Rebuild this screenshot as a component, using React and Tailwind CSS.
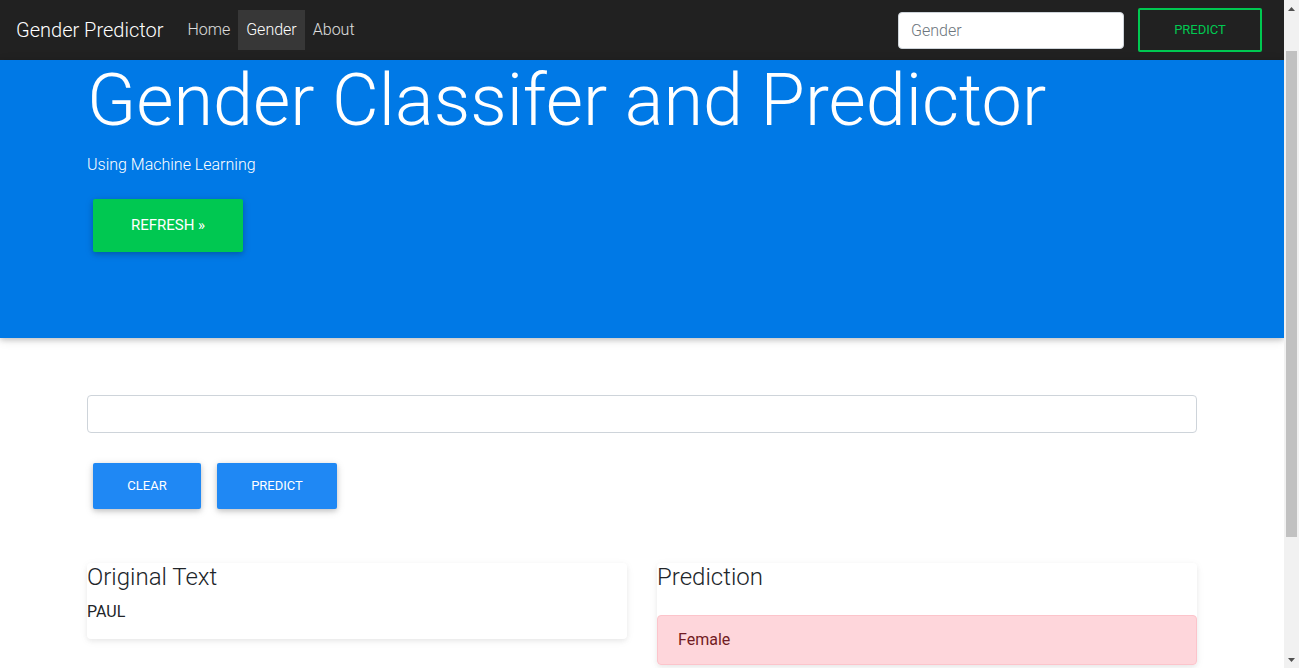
export default function App() {
  return (
    <div className="flex h-[668px] overflow-hidden bg-white font-['Roboto',sans-serif] font-light text-[#212529]">
      <div className="w-[1284px] shrink-0">
        <nav className="flex h-[60px] items-center bg-[#212121] pl-4 pr-[22px]">
          <span className="mr-4 text-[20px] font-light leading-[30px] text-white">Gender Predictor</span>
          <div className="flex items-center">
            <span className="px-2 text-[16px] leading-[40px] text-white/85">Home</span>
            <span className="bg-white/10 px-2 text-[16px] leading-[40px] text-white">Gender</span>
            <span className="px-2 text-[16px] leading-[40px] text-white/85">About</span>
          </div>
          <div className="ml-auto flex items-center">
            <input
              placeholder="Gender"
              className="mr-2 h-[37px] w-[226px] rounded-[4px] border border-[#ced4da] bg-white px-3 text-[16px] font-light text-[#495057] placeholder:text-[#6c757d] outline-none"
            />
            <button className="ml-[6px] h-[44px] w-[124px] rounded-[2px] border-2 border-[#00c851] text-[13px] font-normal uppercase text-[#00c851]">
              Predict
            </button>
          </div>
        </nav>

        <header className="h-[278px] bg-[#0079e6] shadow-[0_2px_5px_0_rgba(0,0,0,0.16),0_2px_10px_0_rgba(0,0,0,0.12)]">
          <div className="mx-auto w-[1110px] pt-[5px]">
            <h1 className="text-[72px] font-light leading-none text-white">Gender Classifer and Predictor</h1>
            <p className="mt-[16px] text-[16px] font-light leading-6 text-white">Using Machine Learning</p>
            <button className="ml-[6px] mt-[22px] h-[53px] w-[150px] rounded-[2px] bg-[#00c851] text-[15px] font-normal uppercase text-white shadow-[0_2px_5px_0_rgba(0,0,0,0.16),0_2px_10px_0_rgba(0,0,0,0.12)]">
              Refresh »
            </button>
          </div>
        </header>

        <main className="mx-auto w-[1110px] pt-[57px]">
          <input className="block h-[38px] w-full rounded-[4px] border border-[#ced4da] bg-white px-3 text-[16px] outline-none" />
          <div className="mt-[30px] flex gap-4 pl-[6px]">
            <button className="h-[46px] w-[108px] rounded-[2px] bg-[#1f88f4] text-[13px] font-normal uppercase text-white shadow-[0_2px_5px_0_rgba(0,0,0,0.16),0_2px_10px_0_rgba(0,0,0,0.12)]">
              Clear
            </button>
            <button className="h-[46px] w-[120px] rounded-[2px] bg-[#1f88f4] text-[13px] font-normal uppercase text-white shadow-[0_2px_5px_0_rgba(0,0,0,0.16),0_2px_10px_0_rgba(0,0,0,0.12)]">
              Predict
            </button>
          </div>

          <div className="mt-[54px] grid grid-cols-2 items-start gap-[30px]">
            <div className="rounded-[4px] bg-white shadow-[0_2px_5px_0_rgba(0,0,0,0.06),0_2px_10px_0_rgba(0,0,0,0.05)]">
              <h4 className="mb-2 text-[24px] font-light leading-[29px]">Original Text</h4>
              <p className="mb-[15px] text-[16px] font-normal leading-6">PAUL</p>
            </div>
            <div className="rounded-[4px] bg-white shadow-[0_2px_5px_0_rgba(0,0,0,0.06),0_2px_10px_0_rgba(0,0,0,0.05)]">
              <h4 className="text-[24px] font-light leading-[29px]">Prediction</h4>
              <div className="mt-[23px] rounded-[4px] border border-[#fcc4cb] bg-[#fed6db] px-5 py-3 text-[16px] font-normal leading-6 text-[#721c24]">
                Female
              </div>
            </div>
          </div>
        </main>
      </div>

      <div className="flex w-[15px] shrink-0 flex-col items-center bg-[#f1f1f1]">
        <div className="flex h-[17px] items-center justify-center">
          <svg width="7" height="4" viewBox="0 0 7 4"><path d="M3.5 0L7 4H0z" fill="#505050" /></svg>
        </div>
        <div className="mt-[34px] h-[486px] w-[11px] bg-[#c1c1c1]" />
        <div className="mt-auto flex h-[17px] items-center justify-center">
          <svg width="7" height="4" viewBox="0 0 7 4"><path d="M0 0H7L3.5 4z" fill="#505050" /></svg>
        </div>
      </div>
    </div>
  );
}
